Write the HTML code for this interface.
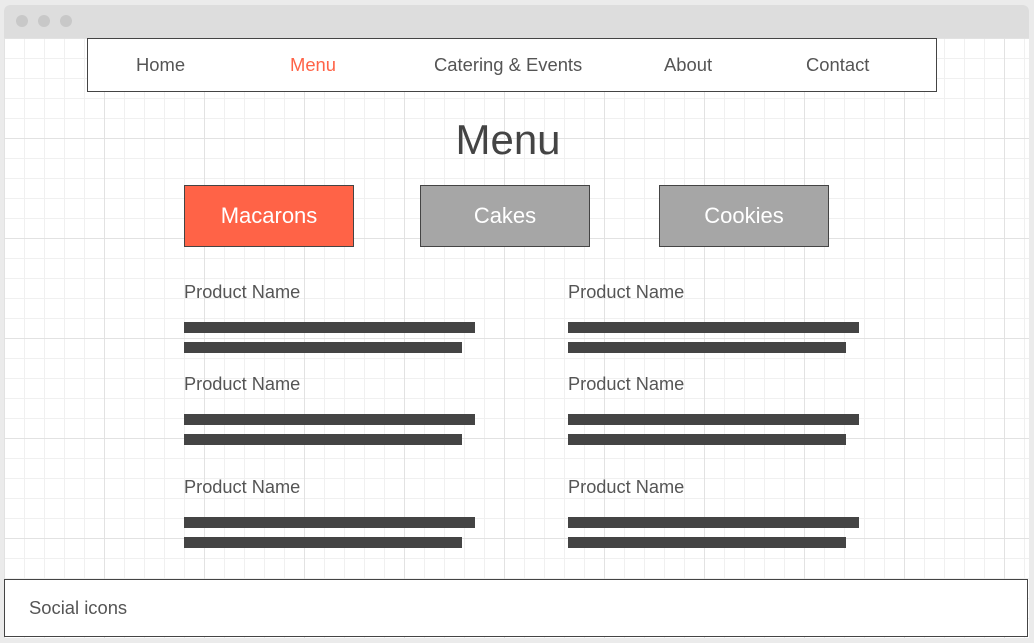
<!DOCTYPE html>
<html><head><style>
body{margin:0;width:1034px;height:643px;background:#ebebeb;font-family:"Liberation Sans",sans-serif;position:relative;overflow:hidden}
.win{position:absolute;left:4px;top:5px;width:1025px;height:633px;background:#fff;border-radius:6px 6px 0 0;overflow:hidden}
.bar{position:absolute;left:0;top:0;right:0;height:33px;background:#dddddd}
.dot{position:absolute;top:10px;width:12px;height:12px;border-radius:50%;background:#c8c8c8}
.grid{position:absolute;left:0;top:33px;right:0;bottom:0;
background-image:linear-gradient(#e2e2e2 1px,transparent 1px),linear-gradient(90deg,#e2e2e2 1px,transparent 1px),linear-gradient(#f0f0f0 1px,transparent 1px),linear-gradient(90deg,#f0f0f0 1px,transparent 1px);
background-size:100px 100px,100px 100px,20px 20px,20px 20px;background-position:0 0,0 0,0 0,0 0}
.abs{position:absolute}
.nav{left:87px;top:38px;width:848px;height:52px;border:1px solid #444;background:#fff}
.nav span{position:absolute;top:15px;font-size:18.4px;color:#555}
h1{position:absolute;left:0;width:1016px;text-align:center;top:116px;margin:0;font-weight:normal;font-size:42px;color:#444}
.btn{position:absolute;top:185px;width:168px;height:60px;border:1px solid #444;color:#fff;font-size:22px;text-align:center;line-height:60px;background:#a6a6a6}
.pn{position:absolute;font-size:18.2px;color:#555}
.ln{position:absolute;height:11px;background:#444}
.foot{left:4px;top:579px;width:1022px;height:56px;border:1px solid #444;background:#fff}
</style></head><body>
<div class="win"><div class="bar"></div>
<div class="dot" style="left:12px"></div><div class="dot" style="left:34px"></div><div class="dot" style="left:56px"></div>
<div class="grid"></div></div>
<div class="abs nav">
<span style="left:48px">Home</span>
<span style="left:202px;color:#ff6347">Menu</span>
<span style="left:346px">Catering &amp; Events</span>
<span style="left:576px">About</span>
<span style="left:718px">Contact</span>
</div>
<h1>Menu</h1>
<div class="btn" style="left:184px;background:#ff6347">Macarons</div>
<div class="btn" style="left:420px">Cakes</div>
<div class="btn" style="left:659px">Cookies</div>

<div class="pn" style="left:184px;top:282px">Product Name</div>
<div class="ln" style="left:184px;top:322px;width:291px"></div>
<div class="ln" style="left:184px;top:342px;width:278px"></div>
<div class="pn" style="left:568px;top:282px">Product Name</div>
<div class="ln" style="left:568px;top:322px;width:291px"></div>
<div class="ln" style="left:568px;top:342px;width:278px"></div>

<div class="pn" style="left:184px;top:374px">Product Name</div>
<div class="ln" style="left:184px;top:414px;width:291px"></div>
<div class="ln" style="left:184px;top:434px;width:278px"></div>
<div class="pn" style="left:568px;top:374px">Product Name</div>
<div class="ln" style="left:568px;top:414px;width:291px"></div>
<div class="ln" style="left:568px;top:434px;width:278px"></div>

<div class="pn" style="left:184px;top:477px">Product Name</div>
<div class="ln" style="left:184px;top:517px;width:291px"></div>
<div class="ln" style="left:184px;top:537px;width:278px"></div>
<div class="pn" style="left:568px;top:477px">Product Name</div>
<div class="ln" style="left:568px;top:517px;width:291px"></div>
<div class="ln" style="left:568px;top:537px;width:278px"></div>

<div class="abs foot"><span style="position:absolute;left:24px;top:17px;font-size:18.4px;color:#555">Social icons</span></div>
</body></html>
